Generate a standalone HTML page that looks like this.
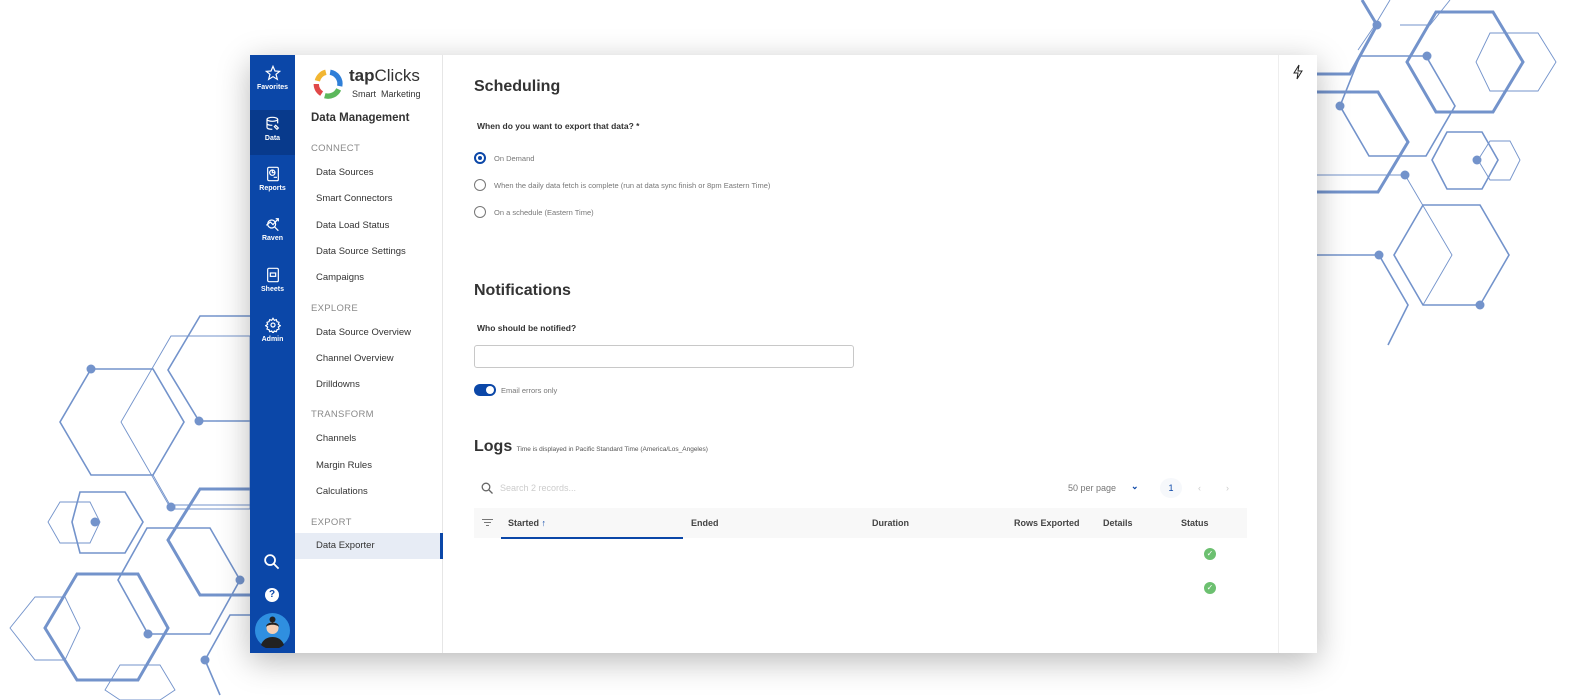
<!DOCTYPE html>
<html><head><meta charset="utf-8"><style>
*{margin:0;padding:0;box-sizing:border-box}
body{width:1575px;height:700px;background:#fff;position:relative;overflow:hidden;font-family:"Liberation Sans",sans-serif;color:#333}
.abs{position:absolute}
#card{position:absolute;left:250px;top:55px;width:1067px;height:598px;background:#fff;box-shadow:0 8px 30px rgba(0,0,0,.28)}
#side{position:absolute;left:0;top:0;width:45px;height:598px;background:#0b47a8}
.si{position:absolute;left:0;width:45px;text-align:center;color:#fff;font-size:7px;font-weight:bold}
.si svg{display:block;margin:0 auto 3px}
#nav{position:absolute;left:45px;top:0;width:148px;height:598px;border-right:1px solid #e6e6e6}
.sec{position:absolute;left:16px;font-size:9.5px;color:#8a8a8a;letter-spacing:.3px}
.it{position:absolute;left:21px;font-size:9.5px;color:#333}
.t{position:absolute;font-size:9px}
h2{position:absolute;font-size:16px;font-weight:bold;color:#333}
.rad{position:absolute;left:474px;width:12px;height:12px;border:1.5px solid #777;border-radius:50%}
.rl{position:absolute;left:494px;font-size:7.5px;color:#777}
.th{position:absolute;top:518px;font-size:9px;color:#444;font-weight:bold}
.ok{position:absolute;left:1204px;width:12px;height:12px;border-radius:50%;background:#6cc070;color:#fff;font-size:8px;text-align:center;line-height:12px}
</style></head><body>
<svg class="abs" style="left:0;top:0" width="1575" height="700" fill="none" stroke="#7393cb">
<g stroke-width="1.6">
<polygon points="91,369 153,369 184,422 153,475 91,475 60,422"/>
<polygon points="80,492 125,492 143,522 125,553 80,553 72,522"/>
<polygon points="147,528 210,528 240,580 210,634 148,634 118,580"/>
<polyline points="250,316 200,316 168,370 199,421 250,421"/>
<polyline points="250,615 230,615 205,660 220,695"/>
<polygon points="1360,56 1426,56 1455,106 1426,156 1369,156 1340,106"/>
<polygon points="1447,132 1482,132 1498,160 1482,189 1447,189 1432,160"/>
<polygon points="1423,205 1480,205 1509,255 1480,305 1423,305 1394,255"/>
<polyline points="1317,255 1379,255 1408,305 1388,345"/>
</g>
<g stroke-width="0.9">
<polygon points="171,336 250,336 250,509 171,509 121,422"/>
<polygon points="60,502 90,502 100,522 90,543 60,543 48,522"/>
<polygon points="35,597 65,597 80,628 65,660 35,660 10,628"/>
<polygon points="120,665 160,665 175,690 160,700 120,700 105,690"/>
<polygon points="1490,33 1538,33 1556,62 1538,91 1490,91 1476,62"/>
<polygon points="1490,141 1510,141 1520,160 1510,180 1490,180 1478,160"/>
<polyline points="1317,175 1405,175 1452,255 1423,305"/>
<polyline points="1390,0 1375,25 1358,50"/>
<polyline points="1450,0 1430,25 1400,25"/>
<polyline points="153,475 170,505 200,505 250,505"/>
</g>
<g stroke-width="3">
<polygon points="1436,12 1493,12 1523,62 1493,112 1436,112 1407,62"/>
<polygon points="77,574 138,574 168,628 138,680 77,680 45,628"/>
<polyline points="253,489 200,489 168,540 200,595 250,595"/>
<polyline points="1317,92 1378,92 1408,142 1378,192 1317,192"/>
<polyline points="1317,74 1350,74 1377,25 1362,0"/>
</g>
<g fill="#7393cb" stroke="none">
<circle cx="91" cy="369" r="4.5"/><circle cx="199" cy="421" r="4.5"/><circle cx="95" cy="522" r="4.5"/><circle cx="171" cy="507" r="4.5"/><circle cx="148" cy="634" r="4.5"/><circle cx="240" cy="580" r="4.5"/><circle cx="205" cy="660" r="4.5"/>
<circle cx="1377" cy="25" r="4.5"/><circle cx="1427" cy="56" r="4.5"/><circle cx="1340" cy="106" r="4.5"/><circle cx="1477" cy="160" r="4.5"/><circle cx="1405" cy="175" r="4.5"/><circle cx="1379" cy="255" r="4.5"/><circle cx="1480" cy="305" r="4.5"/>
</g>
</svg>
<div id="card">
<div id="side">
<div class="si" style="top:10px"><svg width="16" height="16" viewBox="0 0 24 24" fill="none" stroke="#fff" stroke-width="1.8"><polygon points="12,2 15,9 22,9.5 16.5,14 18.5,21.5 12,17.5 5.5,21.5 7.5,14 2,9.5 9,9"/></svg>Favorites</div>
<div class="si" style="top:55px;height:45px;background:#083a8c;padding-top:6px"><svg width="16" height="16" viewBox="0 0 24 24" fill="none" stroke="#fff" stroke-width="1.8"><ellipse cx="11" cy="5" rx="8" ry="3"/><path d="M3 5v12c0 2 4 3 8 3M19 5v6M3 11c0 2 4 3 8 3"/><path d="M16 14l4 4-2 2-4-4z"/></svg>Data</div>
<div class="si" style="top:111px"><svg width="16" height="16" viewBox="0 0 24 24" fill="none" stroke="#fff" stroke-width="1.8"><rect x="4" y="2" width="16" height="20" rx="2"/><circle cx="11" cy="10" r="4"/><path d="M11 6v4h4M13 17h5"/></svg>Reports</div>
<div class="si" style="top:161px"><svg width="16" height="16" viewBox="0 0 24 24" fill="none" stroke="#fff" stroke-width="1.8"><circle cx="10" cy="12" r="6"/><path d="M14 16l6 6M2 14l6-5 4 4 8-9M16 4h4v4"/></svg>Raven</div>
<div class="si" style="top:212px"><svg width="16" height="16" viewBox="0 0 24 24" fill="none" stroke="#fff" stroke-width="1.8"><rect x="4" y="2" width="16" height="20" rx="2"/><rect x="8" y="9" width="8" height="5"/></svg>Sheets</div>
<div class="si" style="top:262px"><svg width="16" height="16" viewBox="0 0 24 24" fill="none" stroke="#fff" stroke-width="1.8"><circle cx="12" cy="12" r="3"/><path d="M12 2l2 3 3-1 1 3 3 1-1 3 3 2-3 2 1 3-3 1-1 3-3-1-2 3-2-3-3 1-1-3-3-1 1-3-3-2 3-2-1-3 3-1 1-3 3 1z"/></svg>Admin</div>
<svg class="abs" style="left:13px;top:498px" width="17" height="17" viewBox="0 0 24 24" fill="none" stroke="#fff" stroke-width="2.5"><circle cx="10" cy="10" r="7"/><path d="M15 15l7 7"/></svg>
<div class="abs" style="left:15px;top:533px;width:14px;height:14px;border-radius:50%;background:#fff;color:#0b47a8;font-size:10px;font-weight:bold;text-align:center;line-height:14px">?</div>
<svg class="abs" style="left:5px;top:558px" width="35" height="35" viewBox="0 0 35 35"><circle cx="17.5" cy="17.5" r="17.5" fill="#2f8fe0"/><path d="M6 32c2-6 7-8 11.5-8s9.5 2 11.5 8a17.5 17.5 0 0 1-23 0z" fill="#222"/><circle cx="17.5" cy="15" r="6" fill="#f5d0b5"/><path d="M11 14c0-6 13-6 13 0-2-3-11-3-13 0z" fill="#222"/><circle cx="17.5" cy="6.5" r="3" fill="#222"/></svg>
</div>
<div id="nav">
<svg class="abs" style="left:17px;top:13px" width="32" height="32" viewBox="0 0 30 30" fill="none" stroke-width="5"><path d="M5 12A11 11 0 0 1 13 4" stroke="#f2b632"/><path d="M17 4A11 11 0 0 1 26 17" stroke="#2f7fd8"/><path d="M25 20A11 11 0 0 1 12 26" stroke="#5cb85c"/><path d="M9 24A11 11 0 0 1 4 15" stroke="#e04848"/></svg>
<div class="abs" style="left:54px;top:11px;font-size:17px;color:#333"><b>tap</b>Clicks</div>
<div class="abs" style="left:57px;top:34px;font-size:9px;color:#333">Smart&nbsp; Marketing</div>
<div class="abs" style="left:16px;top:57px;font-size:11.5px;font-weight:bold;color:#333">Data Management</div>
<div class="sec" style="top:88px">CONNECT</div>
<div class="it" style="top:112px">Data Sources</div>
<div class="it" style="top:138px">Smart Connectors</div>
<div class="it" style="top:165px">Data Load Status</div>
<div class="it" style="top:191px">Data Source Settings</div>
<div class="it" style="top:217px">Campaigns</div>
<div class="sec" style="top:248px">EXPLORE</div>
<div class="it" style="top:272px">Data Source Overview</div>
<div class="it" style="top:298px">Channel Overview</div>
<div class="it" style="top:324px">Drilldowns</div>
<div class="sec" style="top:354px">TRANSFORM</div>
<div class="it" style="top:378px">Channels</div>
<div class="it" style="top:405px">Margin Rules</div>
<div class="it" style="top:431px">Calculations</div>
<div class="sec" style="top:462px">EXPORT</div>
<div class="abs" style="left:0;top:478px;width:148px;height:26px;background:#e7ecf5;border-right:3px solid #0b47a8"></div>
<div class="it" style="top:485px">Data Exporter</div>
</div>
<div class="abs" style="left:1028px;top:0;width:1px;height:598px;background:#eee"></div>
<svg class="abs" style="left:1042px;top:9px" width="12" height="16" viewBox="0 0 12 16" fill="none" stroke="#222" stroke-width="1"><path d="M7 1L2 9h4l-1 6 5-8H6z"/></svg>
</div>
<h2 style="left:474px;top:78px">Scheduling</h2>
<div class="t" style="left:477px;top:121px;font-weight:bold;font-size:8.5px">When do you want to export that data? *</div>
<div class="rad" style="top:152px;border:2px solid #0b47a8"><div style="margin:2px;width:4px;height:4px;border-radius:50%;background:#0b47a8"></div></div>
<div class="rl" style="top:154px">On Demand</div>
<div class="rad" style="top:179px"></div><div class="rl" style="top:181px">When the daily data fetch is complete (run at data sync finish or 8pm Eastern Time)</div>
<div class="rad" style="top:206px"></div><div class="rl" style="top:208px">On a schedule (Eastern Time)</div>
<h2 style="left:474px;top:282px">Notifications</h2>
<div class="t" style="left:477px;top:323px;font-weight:bold;font-size:8.5px">Who should be notified?</div>
<div class="abs" style="left:474px;top:345px;width:380px;height:23px;border:1px solid #c8c8c8;border-radius:3px"></div>
<div class="abs" style="left:474px;top:384px;width:22px;height:12px;border-radius:6px;background:#0b47a8"><div style="position:absolute;right:2px;top:2px;width:8px;height:8px;border-radius:50%;background:#fff"></div></div>
<div class="rl" style="left:501px;top:386px">Email errors only</div>
<div class="abs" style="left:474px;top:438px;font-size:16px;font-weight:bold">Logs <span style="font-size:6.5px;font-weight:normal;color:#555">Time is displayed in Pacific Standard Time (America/Los_Angeles)</span></div>
<svg class="abs" style="left:481px;top:482px" width="12" height="12" viewBox="0 0 12 12" fill="none" stroke="#666" stroke-width="1.3"><circle cx="5" cy="5" r="3.8"/><path d="M8 8l3.5 3.5"/></svg>
<div class="rl" style="left:500px;top:483px;font-size:9px;color:#ccc">Search 2 records...</div>
<div class="rl" style="left:1068px;top:483px;font-size:9px;color:#777">50 per page</div>
<div class="abs" style="left:1131px;top:481px;font-size:9px;color:#0b47a8;font-weight:bold">&#8964;</div>
<div class="abs" style="left:1160px;top:478px;width:22px;height:20px;border-radius:50%;background:#f6f8fb;color:#0b47a8;font-size:9px;text-align:center;line-height:20px">1</div>
<div class="rl" style="left:1198px;top:483px;font-size:9px;color:#ccc">&lsaquo;</div>
<div class="rl" style="left:1226px;top:483px;font-size:9px;color:#ccc">&rsaquo;</div>
<div class="abs" style="left:474px;top:508px;width:773px;height:30px;background:#f8f8f8"></div>
<div class="abs" style="left:482px;top:519px;width:11px;height:1.2px;background:#777"></div>
<div class="abs" style="left:484px;top:522px;width:7px;height:1.2px;background:#777"></div>
<div class="abs" style="left:486px;top:525px;width:3px;height:1.2px;background:#777"></div>
<div class="th" style="left:508px">Started <span style="color:#0b47a8">&#8593;</span></div>
<div class="abs" style="left:501px;top:537px;width:182px;height:2px;background:#0b47a8"></div>
<div class="th" style="left:691px">Ended</div>
<div class="th" style="left:872px">Duration</div>
<div class="th" style="left:1014px">Rows Exported</div>
<div class="th" style="left:1103px">Details</div>
<div class="th" style="left:1181px">Status</div>
<div class="ok" style="top:548px">&#10003;</div>
<div class="ok" style="top:582px">&#10003;</div>
</body></html>
